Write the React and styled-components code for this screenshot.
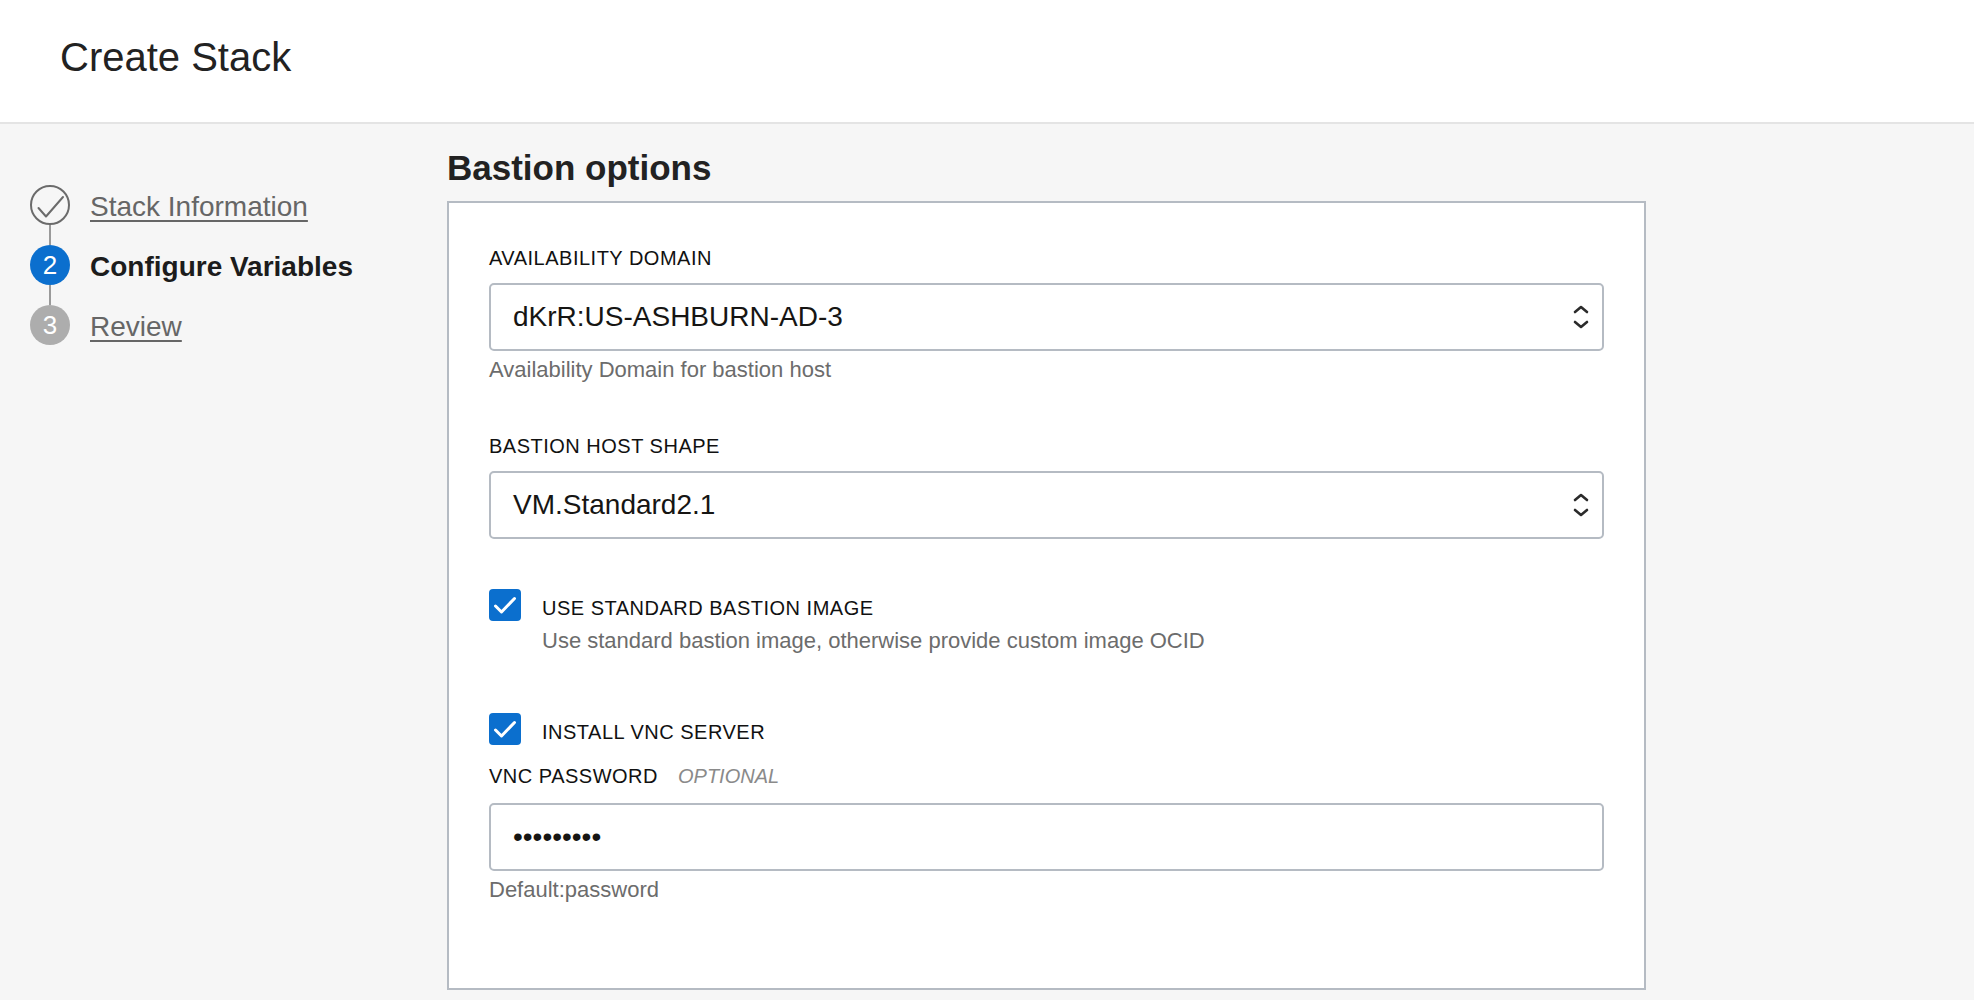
import React from "react";
import styled, { createGlobalStyle } from "styled-components";

const BLUE = "#0b6fce";
const LINE = "#b5bbc3";

const steps = [
  { n: 1, label: "Stack Information", state: "done" },
  { n: 2, label: "Configure Variables", state: "active" },
  { n: 3, label: "Review", state: "pending" },
];

export default function App() {
  return (
    <Page>
      <GlobalStyle />
      <Header>
        <PageTitle>Create Stack</PageTitle>
      </Header>

      <Body>
        <Sidebar>
          {steps.map((s, i) => (
            <React.Fragment key={s.n}>
              {i > 0 && <Connector />}
              <StepRow>
                <StepCircle $state={s.state}>
                  {s.state === "done" ? <DoneCheck /> : s.n}
                </StepCircle>
                <StepLabel $active={s.state === "active"}>{s.label}</StepLabel>
              </StepRow>
            </React.Fragment>
          ))}
        </Sidebar>

        <Main>
          <SectionTitle>Bastion options</SectionTitle>
          <Panel>
            <Field>
              <Label>AVAILABILITY DOMAIN</Label>
              <SelectBox>
                <span>dKrR:US-ASHBURN-AD-3</span>
                <Chevrons />
              </SelectBox>
              <Help>Availability Domain for bastion host</Help>
            </Field>

            <Field>
              <Label>BASTION HOST SHAPE</Label>
              <SelectBox>
                <span>VM.Standard2.1</span>
                <Chevrons />
              </SelectBox>
            </Field>

            <Field $gap={58}>
              <CheckRow>
                <CheckBox />
                <CheckLabel>USE STANDARD BASTION IMAGE</CheckLabel>
              </CheckRow>
              <CheckHelp>Use standard bastion image, otherwise provide custom image OCID</CheckHelp>
            </Field>

            <Field $gap={0}>
              <CheckRow>
                <CheckBox />
                <CheckLabel>INSTALL VNC SERVER</CheckLabel>
              </CheckRow>
              <Label $top={19} $bottom={15}>
                VNC PASSWORD<Optional>OPTIONAL</Optional>
              </Label>
              <TextInput type="password" defaultValue="password1" readOnly />
              <Help>Default:password</Help>
            </Field>
          </Panel>
        </Main>
      </Body>
    </Page>
  );
}

function DoneCheck() {
  return (
    <svg width="36" height="36" viewBox="0 0 36 36" fill="none">
      <path d="M6.5 21 L14 29.5 L31 10" stroke="#6b6b6b" strokeWidth="2" strokeLinecap="round" strokeLinejoin="round" />
    </svg>
  );
}

function Chevrons() {
  return (
    <svg width="18" height="26" viewBox="0 0 18 26" fill="none">
      <path d="M3 8 L9 3 L15 8" stroke="#2b2b2b" strokeWidth="2.6" strokeLinecap="round" strokeLinejoin="round" />
      <path d="M3 18 L9 23 L15 18" stroke="#2b2b2b" strokeWidth="2.6" strokeLinecap="round" strokeLinejoin="round" />
    </svg>
  );
}

function CheckBox() {
  return (
    <Box>
      <svg width="32" height="32" viewBox="0 0 32 32" fill="none">
        <path d="M6.5 17 L12.5 23 L25.5 9.5" stroke="#fff" strokeWidth="3" strokeLinecap="round" strokeLinejoin="round" />
      </svg>
    </Box>
  );
}

const GlobalStyle = createGlobalStyle`
  html, body {
    margin: 0;
    padding: 0;
    background: #f6f6f6;
    font-family: "Liberation Sans", Arial, sans-serif;
    color: #161513;
  }
  * { box-sizing: border-box; }
`;

const Page = styled.div`
  min-height: 100vh;
  display: flex;
  flex-direction: column;
`;

const Header = styled.header`
  height: 124px;
  background: #fff;
  border-bottom: 2px solid #e4e4e4;
  padding: 33px 0 0 60px;
`;

const PageTitle = styled.h1`
  margin: 0;
  font-size: 40px;
  line-height: 48px;
  font-weight: 400;
  color: #222;
`;

const Body = styled.div`
  display: flex;
`;

const Sidebar = styled.nav`
  width: 447px;
  flex-shrink: 0;
  padding: 61px 0 0 30px;
  display: flex;
  flex-direction: column;
`;

const StepRow = styled.div`
  height: 40px;
  display: flex;
  align-items: center;
  gap: 20px;
`;

const Connector = styled.div`
  width: 2px;
  height: 20px;
  margin-left: 19px;
  background: #9a9a9a;
`;

const StepCircle = styled.div`
  width: 40px;
  height: 40px;
  border-radius: 50%;
  display: flex;
  align-items: center;
  justify-content: center;
  font-size: 26px;
  color: #fff;
  background: ${({ $state }) =>
    $state === "active" ? BLUE : $state === "pending" ? "#adadad" : "transparent"};
  border: ${({ $state }) => ($state === "done" ? "2px solid #6b6b6b" : "none")};
`;

const StepLabel = styled.span`
  font-size: 28px;
  line-height: 40px;
  margin-top: 3px;
  font-weight: ${({ $active }) => ($active ? 700 : 400)};
  color: ${({ $active }) => ($active ? "#1c1c1c" : "#666")};
  text-decoration: ${({ $active }) => ($active ? "none" : "underline")};
  text-decoration-thickness: 1.5px;
  text-underline-offset: 4px;
`;

const Main = styled.main`
  flex: 1;
  padding-top: 24px;
`;

const SectionTitle = styled.h2`
  margin: 0 0 13px;
  font-size: 35px;
  line-height: 40px;
  font-weight: 700;
  color: #222;
`;

const Panel = styled.section`
  width: 1199px;
  background: #fff;
  border: 2px solid ${LINE};
  padding: 43px 40px 84px;
`;

const Field = styled.div`
  margin-bottom: ${({ $gap }) => ($gap ?? 50)}px;
`;

const Label = styled.div`
  font-size: 20px;
  line-height: 24px;
  letter-spacing: 0.5px;
  color: #111;
  margin-top: ${({ $top }) => $top || 0}px;
  margin-bottom: ${({ $bottom }) => $bottom ?? 13}px;
`;

const Optional = styled.span`
  margin-left: 20px;
  font-style: italic;
  letter-spacing: 0;
  color: #8a8a8a;
`;

const SelectBox = styled.div`
  height: 68px;
  border: 2px solid ${LINE};
  border-radius: 5px;
  padding: 0 12px 0 22px;
  display: flex;
  align-items: center;
  justify-content: space-between;
  font-size: 28px;
  color: #161513;
`;

const Help = styled.div`
  margin-top: 5px;
  font-size: 22px;
  line-height: 28px;
  color: #6c6c6c;
`;

const CheckRow = styled.div`
  display: flex;
  align-items: center;
  gap: 21px;
`;

const Box = styled.span`
  width: 32px;
  height: 32px;
  border-radius: 4px;
  background: ${BLUE};
  display: flex;
  flex-shrink: 0;
`;

const CheckLabel = styled.span`
  font-size: 20px;
  line-height: 24px;
  letter-spacing: 0.5px;
  padding-top: 6px;
  color: #111;
`;

const CheckHelp = styled(Help)`
  margin: 6px 0 0 53px;
`;

const TextInput = styled.input`
  display: block;
  width: 100%;
  height: 68px;
  border: 2px solid ${LINE};
  border-radius: 5px;
  padding: 0 22px;
  font-family: "Liberation Sans", Arial, sans-serif;
  font-size: 28px;
  color: #161513;
  background: #fff;
  outline: none;
`;
